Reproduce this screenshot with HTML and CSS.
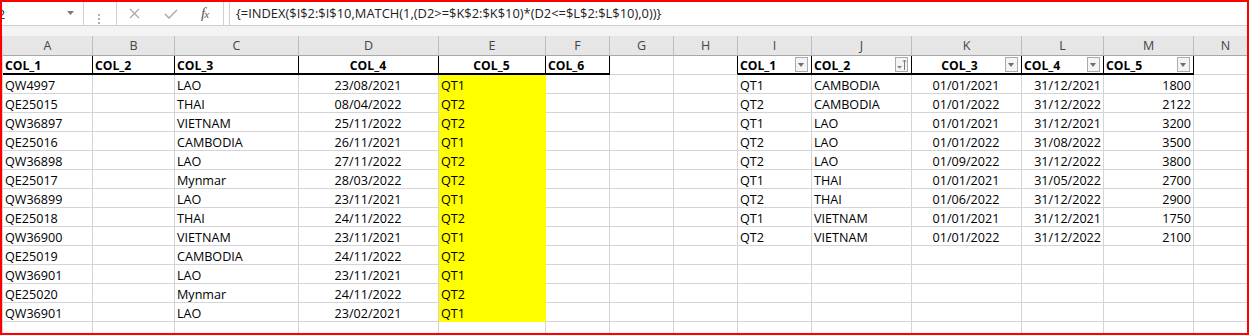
FILE: index.html
```html
<!DOCTYPE html>
<html lang="en">

<head>
    <meta charset="UTF-8">
    <title>Sheet1 - Excel</title>
    <link rel="stylesheet" href="styles.css">
</head>

<body>

    <div class="window">
        <div class="formula-bar">
            <div class="name-box">
                <span class="cell-ref">I2</span>
                <svg class="caret" width="8" height="5" viewBox="0 0 8 5"><path d="M0 0h7L3.5 4z" fill="#7a7a7a"/></svg>
            </div>
            <div class="grip">
                <svg width="3" height="11" viewBox="0 0 3 11"><rect x="0" y="0" width="2" height="2" fill="#b0b0b0"/><rect x="0" y="4" width="2" height="2" fill="#b0b0b0"/><rect x="0" y="8" width="2" height="2" fill="#b0b0b0"/></svg>
            </div>
            <div class="fx-buttons">
                <svg class="btn-x" width="11" height="11" viewBox="0 0 11 11"><path d="M1 1l9 9M10 1l-9 9" stroke="#a8a8a8" stroke-width="1.3"/></svg>
                <svg class="btn-ok" width="14" height="10" viewBox="0 0 14 10"><path d="M1 5l4 4 8-8" stroke="#a8a8a8" stroke-width="1.4" fill="none"/></svg>
                <span class="fx"><i>f</i><small>x</small></span>
            </div>
            <div class="formula">{=INDEX($I$2:$I$10,MATCH(1,(D2&gt;=$K$2:$K$10)*(D2&lt;=$L$2:$L$10),0))}</div>
        </div>

        <div class="gap"></div>

        <div class="sheet">
            <div class="row heads">
                <div>A</div><div>B</div><div>C</div><div>D</div><div>E</div><div>F</div><div>G</div>
                <div>H</div><div>I</div><div>J</div><div>K</div><div>L</div><div>M</div><div>N</div>
            </div>

            <div class="row titles">
                <div class="th">COL_1</div>
                <div class="th">COL_2</div>
                <div class="th">COL_3</div>
                <div class="th c">COL_4</div>
                <div class="th c">COL_5</div>
                <div class="th">COL_6</div>
                <div></div>
                <div class="edge"></div>
                <div class="th filter"><span>COL_1</span><i class="drop"></i></div>
                <div class="th filter"><span>COL_2</span><i class="drop sorted"><svg width="11" height="13" viewBox="0 0 11 13"><path d="M1 8h5L3.5 10.5z" fill="#7a7a7a"/><path d="M8.5 12V2M6.8 3.8L8.5 2l1.7 1.8" stroke="#7a7a7a" stroke-width="1" fill="none"/></svg></i></div>
                <div class="th filter"><span class="c">COL_3</span><i class="drop"></i></div>
                <div class="th filter"><span>COL_4</span><i class="drop"></i></div>
                <div class="th filter"><span>COL_5</span><i class="drop"></i></div>
                <div></div>
            </div>

            <div class="row">
                <div>QW4997</div><div></div><div>LAO</div><div class="c">23/08/2021</div><div class="y">QT1</div><div></div><div></div><div></div>
                <div>QT1</div><div>CAMBODIA</div><div class="c">01/01/2021</div><div class="r">31/12/2021</div><div class="r">1800</div><div></div>
            </div>
            <div class="row">
                <div>QE25015</div><div></div><div>THAI</div><div class="c">08/04/2022</div><div class="y">QT2</div><div></div><div></div><div></div>
                <div>QT2</div><div>CAMBODIA</div><div class="c">01/01/2022</div><div class="r">31/12/2022</div><div class="r">2122</div><div></div>
            </div>
            <div class="row">
                <div>QW36897</div><div></div><div>VIETNAM</div><div class="c">25/11/2022</div><div class="y">QT2</div><div></div><div></div><div></div>
                <div>QT1</div><div>LAO</div><div class="c">01/01/2021</div><div class="r">31/12/2021</div><div class="r">3200</div><div></div>
            </div>
            <div class="row">
                <div>QE25016</div><div></div><div>CAMBODIA</div><div class="c">26/11/2021</div><div class="y">QT1</div><div></div><div></div><div></div>
                <div>QT2</div><div>LAO</div><div class="c">01/01/2022</div><div class="r">31/08/2022</div><div class="r">3500</div><div></div>
            </div>
            <div class="row">
                <div>QW36898</div><div></div><div>LAO</div><div class="c">27/11/2022</div><div class="y">QT2</div><div></div><div></div><div></div>
                <div>QT2</div><div>LAO</div><div class="c">01/09/2022</div><div class="r">31/12/2022</div><div class="r">3800</div><div></div>
            </div>
            <div class="row">
                <div>QE25017</div><div></div><div>Mynmar</div><div class="c">28/03/2022</div><div class="y">QT2</div><div></div><div></div><div></div>
                <div>QT1</div><div>THAI</div><div class="c">01/01/2021</div><div class="r">31/05/2022</div><div class="r">2700</div><div></div>
            </div>
            <div class="row">
                <div>QW36899</div><div></div><div>LAO</div><div class="c">23/11/2021</div><div class="y">QT1</div><div></div><div></div><div></div>
                <div>QT2</div><div>THAI</div><div class="c">01/06/2022</div><div class="r">31/12/2022</div><div class="r">2900</div><div></div>
            </div>
            <div class="row">
                <div>QE25018</div><div></div><div>THAI</div><div class="c">24/11/2022</div><div class="y">QT2</div><div></div><div></div><div></div>
                <div>QT1</div><div>VIETNAM</div><div class="c">01/01/2021</div><div class="r">31/12/2021</div><div class="r">1750</div><div></div>
            </div>
            <div class="row">
                <div>QW36900</div><div></div><div>VIETNAM</div><div class="c">23/11/2021</div><div class="y">QT1</div><div></div><div></div><div></div>
                <div>QT2</div><div>VIETNAM</div><div class="c">01/01/2022</div><div class="r">31/12/2022</div><div class="r">2100</div><div></div>
            </div>
            <div class="row">
                <div>QE25019</div><div></div><div>CAMBODIA</div><div class="c">24/11/2022</div><div class="y">QT2</div><div></div><div></div><div></div>
                <div></div><div></div><div></div><div></div><div></div><div></div>
            </div>
            <div class="row">
                <div>QW36901</div><div></div><div>LAO</div><div class="c">23/11/2021</div><div class="y">QT1</div><div></div><div></div><div></div>
                <div></div><div></div><div></div><div></div><div></div><div></div>
            </div>
            <div class="row">
                <div>QE25020</div><div></div><div>Mynmar</div><div class="c">24/11/2022</div><div class="y">QT2</div><div></div><div></div><div></div>
                <div></div><div></div><div></div><div></div><div></div><div></div>
            </div>
            <div class="row">
                <div>QW36901</div><div></div><div>LAO</div><div class="c">23/02/2021</div><div class="y">QT1</div><div></div><div></div><div></div>
                <div></div><div></div><div></div><div></div><div></div><div></div>
            </div>
            <div class="row">
                <div></div><div></div><div></div><div></div><div></div><div></div><div></div><div></div>
                <div></div><div></div><div></div><div></div><div></div><div></div>
            </div>
        </div>
    </div>

</body>

</html>
```

FILE: styles.css
```css
:root {
    --grid-color: #d4d4d4;
    --frame-color: #d0d0d0;
    --head-bg: #e6e6e6;
    --head-line: #bdbdbd;
    --text-color: #000;
    --fill-color: #ffff00;
    --alert-color: #ff0000;
}

body {
    margin: 0;
    font-family: "Open Sans", sans-serif;
    background-color: #fff;
    color: var(--text-color);
}

.window {
    width: 1249px;
    height: 335px;
    box-sizing: border-box;
    border: 2px solid var(--alert-color);
    overflow: hidden;
    background-color: #fff;
}

/* formula bar */

.formula-bar {
    display: flex;
    height: 23px;
    border-bottom: 1px solid var(--frame-color);
    background-color: #fff;
}

.name-box {
    width: 82px;
    box-sizing: border-box;
    border-right: 1px solid var(--frame-color);
    display: flex;
    align-items: center;
    overflow: hidden;
}

.cell-ref {
    margin-left: -8px;
    font-size: 13px;
    color: #333;
}

.caret {
    margin-left: auto;
    margin-right: 8px;
}

.grip {
    width: 32px;
    box-sizing: border-box;
    padding: 6px 0 0 14px;
}

.fx-buttons {
    width: 108px;
    box-sizing: border-box;
    border-left: 1px solid var(--frame-color);
    border-right: 1px solid var(--frame-color);
    display: flex;
    align-items: center;
    margin-right: 5px;
}

.btn-x {
    margin-left: 12px;
}

.btn-ok {
    margin-left: 24px;
}

.fx {
    margin-left: 23px;
    font-family: "Liberation Serif", serif;
    font-size: 15px;
    color: #555;
    letter-spacing: -1px;
}

.fx small {
    font-size: 11px;
    font-style: italic;
}

.formula {
    flex: 1;
    border-left: 1px solid var(--frame-color);
    padding-left: 6px;
    font-size: 12.9px;
    line-height: 23px;
    color: #222;
    white-space: nowrap;
}

.gap {
    height: 10px;
    background-color: #f3f3f3;
}

/* grid */

.sheet {
    border-left: 1px solid var(--grid-color);
    width: max-content;
}

.row {
    display: grid;
    grid-template-columns: 90px 82px 124px 140px 107px 64px 64px 64px 74px 100px 110px 82px 90px 64px;
}

.row > div {
    height: 19px;
    box-sizing: border-box;
    border-right: 1px solid var(--grid-color);
    border-bottom: 1px solid var(--grid-color);
    padding: 2px 3px 0 2px;
    font-size: 12.6px;
    line-height: 17px;
    white-space: nowrap;
    overflow: hidden;
}

.row.heads > div {
    height: 20px;
    padding: 0;
    background-color: var(--head-bg);
    border-right-color: var(--head-line);
    border-bottom-color: #a8a8a8;
    text-align: center;
    font-size: 12.5px;
    line-height: 20px;
    color: #444;
}

.row.titles > div {
    padding-top: 1px;
    font-weight: bold;
    font-size: 12.2px;
}

.row.titles > .th {
    border-right-color: #000;
    border-bottom: 2px solid #000;
}

.row.titles > .edge {
    border-right-color: #000;
}

.th.filter {
    display: flex;
    padding-right: 3px;
}

.th.filter span {
    flex: 1;
}

.drop {
    width: 13px;
    height: 15px;
    box-sizing: border-box;
    border: 1px solid #ababab;
    background-color: #f4f4f4;
    position: relative;
}

.drop::after {
    content: "";
    position: absolute;
    left: 2px;
    top: 5px;
    border-left: 3.5px solid transparent;
    border-right: 3.5px solid transparent;
    border-top: 4px solid #6e6e6e;
}

.drop.sorted::after {
    display: none;
}

.drop svg {
    display: block;
}

.c {
    text-align: center;
}

.r {
    text-align: right;
}

.row > .r {
    padding-right: 2px;
}

.row > .y {
    background-color: var(--fill-color);
    border-bottom-color: var(--fill-color);
    border-right-color: var(--fill-color);
}
```
